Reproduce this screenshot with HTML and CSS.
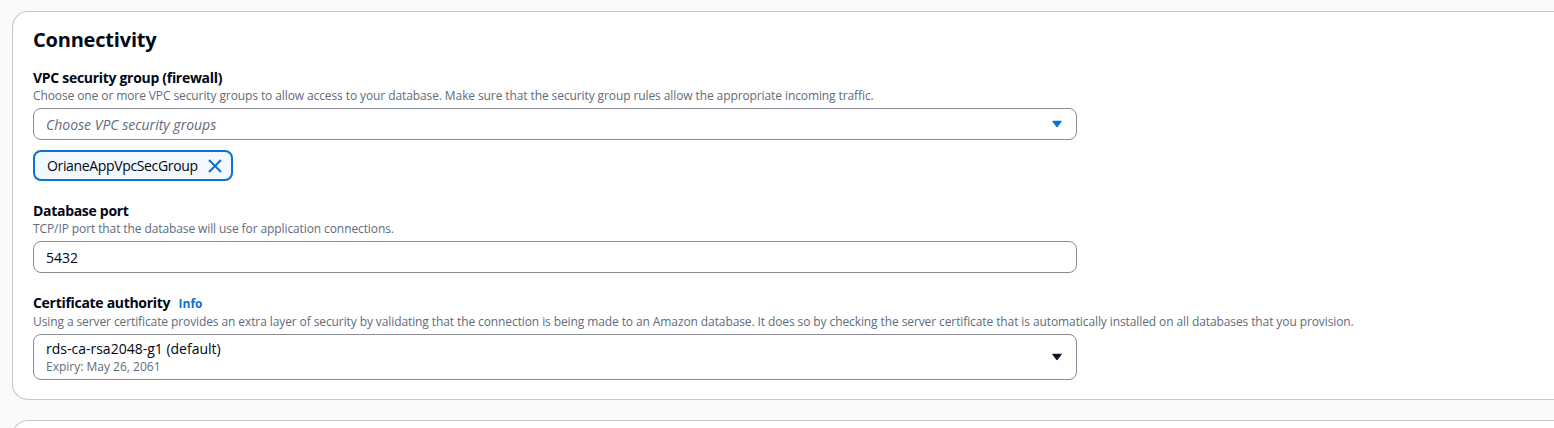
FILE: index.html
```html
<!DOCTYPE html>
<html>
<head>
<meta charset="utf-8">
<link rel="stylesheet" href="styles.css">
</head>
<body>
<div class="page">
  <section class="card">
    <h2 class="title">Connectivity</h2>

    <div class="field">
      <div class="label">VPC security group (firewall)</div>
      <div class="desc">Choose one or more VPC security groups to allow access to your database. Make sure that the security group rules allow the appropriate incoming traffic.</div>
      <div class="select">
        <span class="placeholder">Choose VPC security groups</span>
        <svg class="caret" width="12" height="12" viewBox="0 0 16 16"><path d="M2.5 4.5h11l-5.5 7z" fill="#0972d3" stroke="#0972d3" stroke-width="1.5" stroke-linejoin="round"/></svg>
      </div>
      <div class="tokens">
        <div class="token">
          <span>OrianeAppVpcSecGroup</span>
          <svg width="16" height="16" viewBox="0 0 16 16"><path d="M2 2l12 12M14 2L2 14" stroke="#0972d3" stroke-width="2" fill="none"/></svg>
        </div>
      </div>
    </div>

    <div class="field">
      <div class="label">Database port</div>
      <div class="desc">TCP/IP port that the database will use for application connections.</div>
      <div class="input">5432</div>
    </div>

    <div class="field">
      <div class="label">Certificate authority <a class="info">Info</a></div>
      <div class="desc">Using a server certificate provides an extra layer of security by validating that the connection is being made to an Amazon database. It does so by checking the server certificate that is automatically installed on all databases that you provision.</div>
      <div class="select tall">
        <div class="opt">
          <div class="opt-main">rds-ca-rsa2048-g1 (default)</div>
          <div class="opt-sub">Expiry: May 26, 2061</div>
        </div>
        <svg class="caret" width="12" height="12" viewBox="0 0 16 16"><path d="M2.5 4.5h11l-5.5 7z" fill="#0f1b2a" stroke="#0f1b2a" stroke-width="1.5" stroke-linejoin="round"/></svg>
      </div>
    </div>
  </section>
  <section class="card next"></section>
</div>
</body>
</html>
```

FILE: styles.css
```css
html, body {
  margin: 0;
  padding: 0;
  background: #fafafa;
  font-family: "Open Sans", "Noto Sans", sans-serif;
  color: #000716;
}
.page {
  padding: 11px 0 0 12px;
  overflow: hidden;
  height: 428px;
  box-sizing: border-box;
}
.card {
  background: #ffffff;
  border: 1px solid #c6c6cd;
  border-right: none;
  border-radius: 16px 0 0 16px;
  padding: 16px 0 19px 20px;
  width: calc(100% + 20px);
  box-sizing: border-box;
}
.card.next {
  margin-top: 20px;
  height: 40px;
  padding: 0;
}
.title {
  margin: 0;
  font-size: 20px;
  line-height: 24px;
  font-weight: 700;
  letter-spacing: -0.2px;
}
.field {
  width: 1044px;
  margin-top: 20px;
}
.title + .field {
  margin-top: 16px;
}
.label {
  font-size: 14px;
  line-height: 20px;
  font-weight: 700;
  letter-spacing: -0.3px;
}
.info {
  color: #0972d3;
  font-size: 12px;
  font-weight: 700;
  letter-spacing: 0;
  margin-left: 5px;
}
.desc {
  font-size: 12px;
  line-height: 16px;
  color: #5f6b7a;
  white-space: nowrap;
  letter-spacing: -0.1px;
  margin-bottom: 4px;
}
.select, .input {
  display: flex;
  align-items: center;
  justify-content: space-between;
  height: 32px;
  box-sizing: border-box;
  border: 1px solid #8c8c94;
  border-radius: 8px;
  padding: 0 13px 0 12px;
  font-size: 14px;
  background: #fff;
}
.placeholder {
  font-style: italic;
  color: #5f6b7a;
}
.caret {
  display: block;
}
.select.tall {
  height: 46px;
}
.opt-main {
  font-size: 14px;
  line-height: 20px;
}
.opt-sub {
  font-size: 12px;
  line-height: 16px;
  color: #5f6b7a;
}
.tokens {
  display: flex;
  margin-top: 10px;
}
.token {
  display: flex;
  align-items: center;
  gap: 9px;
  height: 31px;
  box-sizing: border-box;
  padding: 0 8px 0 12px;
  border: 2px solid #0972d3;
  border-radius: 8px;
  background: #f2f8fd;
  font-size: 14px;
  letter-spacing: -0.35px;
}
.token svg {
  display: block;
}
```
